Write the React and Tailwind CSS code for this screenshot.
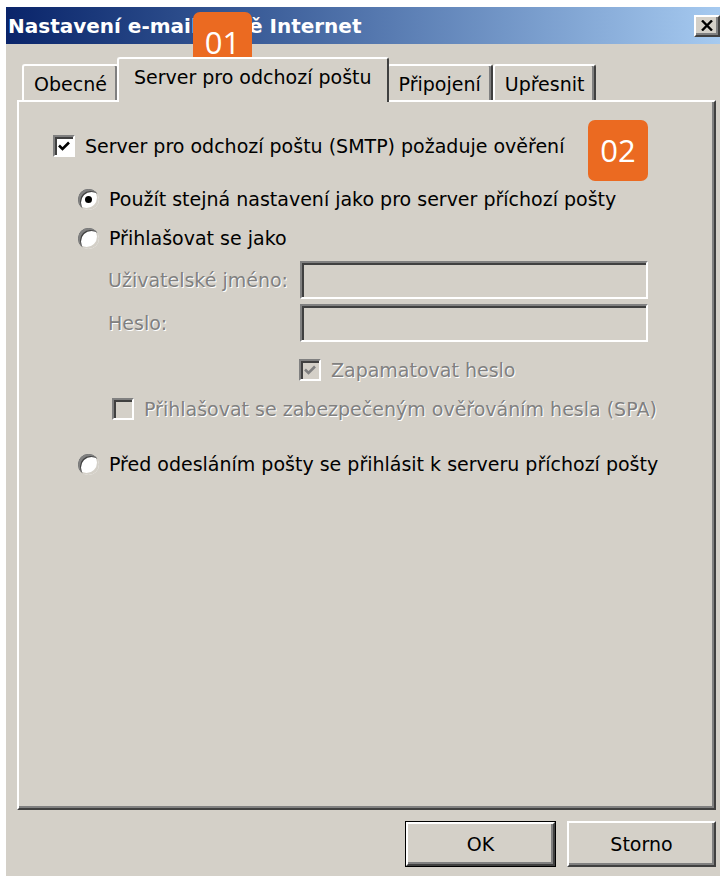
import React from 'react';

const FONT = "font-['DejaVu_Sans',Verdana,sans-serif]";

// classic 3D borders
const raised =
  'border-t-2 border-l-2 border-t-white border-l-white border-r-2 border-b-2 border-r-[#404040] border-b-[#404040] shadow-[inset_-2px_-2px_0_#808080]';
const sunken =
  'border-t-2 border-l-2 border-t-[#808080] border-l-[#808080] border-r-2 border-b-2 border-r-white border-b-white shadow-[inset_2px_2px_0_#404040]';

const Badge = ({ children, className }) => (
  <div
    className={`absolute flex items-center justify-center rounded-[7px] bg-[#eb6a21] text-white text-[31px] font-['Open_Sans',sans-serif] ${className}`}
  >
    {children}
  </div>
);

const CheckBox = ({ checked, disabled }) => (
  <span
    className={`inline-flex h-[22px] w-[22px] shrink-0 items-center justify-center ${sunken} ${
      disabled ? 'bg-[#d4d0c8]' : 'bg-white'
    }`}
  >
    {checked && (
      <svg width="14" height="14" viewBox="0 0 14 14">
        <path
          d="M2 6.5 L5.5 10 L12 3.5"
          fill="none"
          stroke={disabled ? '#808080' : '#000'}
          strokeWidth="2.6"
        />
      </svg>
    )}
  </span>
);

const Radio = ({ checked }) => (
  <span className="relative inline-flex h-[21px] w-[21px] shrink-0 items-center justify-center rounded-full bg-white shadow-[inset_2px_2px_0_#808080,inset_3px_3px_0_#404040,inset_-2px_-2px_0_#d4d0c8]">
    {checked && <span className="h-[7px] w-[7px] rounded-full bg-black" />}
  </span>
);

const Option = ({ children, control, disabled, className = '' }) => (
  <label className={`flex h-[30px] items-center gap-[10px] whitespace-nowrap ${className}`}>
    {control}
    <span
      className={
        disabled ? 'text-[#808080] [text-shadow:1px_1px_0_#fff]' : 'text-black'
      }
    >
      {children}
    </span>
  </label>
);

const Field = ({ label, className = '' }) => (
  <div className={`flex h-[38px] items-center ${className}`}>
    <span className="w-[192px] pl-[89px] box-content whitespace-nowrap text-[#808080] [text-shadow:1px_1px_0_#fff]">
      {label}
    </span>
    <div className={`h-[38px] w-[348px] bg-[#d4d0c8] ${sunken}`} />
  </div>
);

const tabs = ['Obecné', 'Server pro odchozí poštu', 'Připojení', 'Upřesnit'];

export default function App() {
  return (
    <div className={`min-h-screen bg-white pt-[7px] pl-[6px] ${FONT} text-[19px]`}>
      <div className="relative flex h-[869px] w-[714px] flex-col bg-[#d4d0c8]">
        {/* caption */}
        <div className="flex h-[37px] items-center justify-between bg-gradient-to-r from-[#0a246a] to-[#a6caf0] pl-[2px]">
          <span className="flex whitespace-nowrap text-[20px] font-bold text-white">
            <span>Nastavení e-mai</span>
            <span className="inline-block w-[58px] overflow-hidden">lu ve služb</span>
            <span>ě Internet</span>
          </span>
          <button className={`flex h-[22px] w-[26px] items-center justify-center bg-[#d4d0c8] ${raised}`}>
            <svg width="12" height="11" viewBox="0 0 12 11">
              <path d="M1 0.5 L11 10.5 M11 0.5 L1 10.5" stroke="#000" strokeWidth="2.4" />
            </svg>
          </button>
        </div>

        {/* tabs */}
        <div className="ml-[16px] mt-[13px] flex h-[43px] items-end">
          {tabs.map((t, i) =>
            i === 1 ? (
              <div
                key={t}
                className="relative z-10 -mx-[2px] -mb-[2px] flex h-[45px] items-center rounded-t-[3px] border-l-2 border-t-2 border-r-2 border-l-white border-t-white border-r-[#404040] bg-[#d4d0c8] px-[15px] pb-[6px]"
              >
                {t}
              </div>
            ) : (
              <div
                key={t}
                className="flex h-[36px] items-center rounded-t-[3px] border-l-2 border-t-2 border-r-2 border-l-white border-t-white border-r-[#404040] px-[10px] pt-[2px] shadow-[inset_-2px_0_0_#808080]"
              >
                {t}
              </div>
            )
          )}
        </div>

        {/* tab page */}
        <div className={`ml-[11px] flex h-[710px] w-[699px] flex-col ${raised} border-t-white pt-[29px]`}>
          <Option className="ml-[34px]" control={<CheckBox checked />}>
            Server pro odchozí poštu (SMTP) požaduje ověření
          </Option>
          <Option className="ml-[59px] mt-[23px]" control={<Radio checked />}>
            Použít stejná nastavení jako pro server příchozí pošty
          </Option>
          <Option className="ml-[59px] mt-[9px]" control={<Radio />}>
            Přihlašovat se jako
          </Option>
          <Field label="Uživatelské jméno:" className="mt-[8px]" />
          <Field label="Heslo:" className="mt-[5px]" />
          <Option className="ml-[280px] mt-[13px]" disabled control={<CheckBox checked disabled />}>
            Zapamatovat heslo
          </Option>
          <Option className="ml-[93px] mt-[9px]" disabled control={<CheckBox disabled />}>
            Přihlašovat se zabezpečeným ověřováním hesla (SPA)
          </Option>
          <Option className="ml-[59px] mt-[25px]" control={<Radio />}>
            Před odesláním pošty se přihlásit k serveru příchozí pošty
          </Option>
        </div>

        {/* buttons */}
        <div className="mt-[11px] flex justify-end gap-[11px] pr-[4px]">
          <button className="h-[46px] w-[151px] border border-black">
            <span className={`flex h-full w-full items-center justify-center ${raised}`}>OK</span>
          </button>
          <button className={`flex h-[46px] w-[149px] items-center justify-center ${raised}`}>
            Storno
          </button>
        </div>

        <Badge className="left-[187px] top-[5px] h-[60px] w-[59px]">01</Badge>
        <Badge className="left-[582px] top-[113px] h-[61px] w-[60px]">02</Badge>
      </div>
    </div>
  );
}
